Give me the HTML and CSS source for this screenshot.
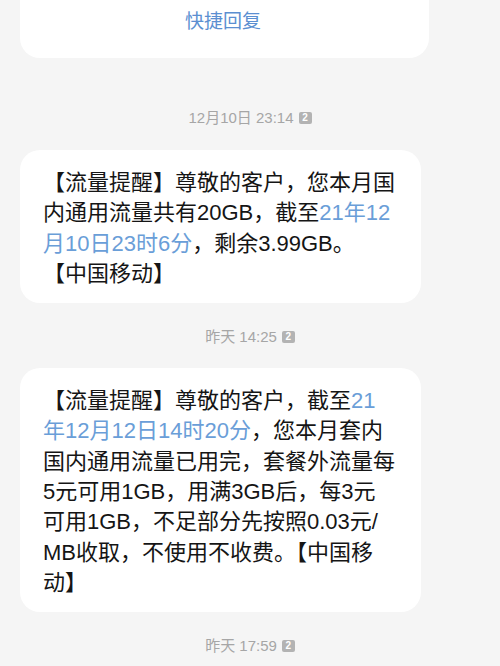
FILE: index.html
```html
<!DOCTYPE html>
<html lang="zh-CN">
<head>
<meta charset="utf-8">
<link rel="stylesheet" href="styles.css">
</head>
<body>
<div class="thread">
  <div class="card card-top">
    <div class="quick">快捷回复</div>
  </div>

  <div class="stamp stamp-first"><span>12月10日 23:14</span><span class="sim">2</span></div>

  <div class="card msg">
    <p>【流量提醒】尊敬的客户，您本月国<br>内通用流量共有20GB，截至<span class="link">21年12<br>月10日23时6分</span>，剩余3.99GB。<br>【中国移动】</p>
  </div>

  <div class="stamp"><span>昨天 14:25</span><span class="sim">2</span></div>

  <div class="card msg">
    <p>【流量提醒】尊敬的客户，截至<span class="link">21<br>年12月12日14时20分</span>，您本月套内<br>国内通用流量已用完，套餐外流量每<br>5元可用1GB，用满3GB后，每3元<br>可用1GB，不足部分先按照0.03元/<br>MB收取，不使用不收费。【中国移<br>动】</p>
  </div>

  <div class="stamp"><span>昨天 17:59</span><span class="sim">2</span></div>
</div>
</body>
</html>
```

FILE: styles.css
```css
html, body {
  margin: 0;
  padding: 0;
  background: #f5f5f5;
}
body {
  width: 500px;
  height: 666px;
  overflow: hidden;
  font-family: "Liberation Sans", "Noto Sans CJK SC", sans-serif;
}
.thread {
  display: flex;
  flex-direction: column;
  padding-left: 20px;
}
.card {
  background: #ffffff;
  border-radius: 20px;
}
.card-top {
  width: 409px;
  height: 58px;
  border-radius: 0 0 20px 20px;
  display: flex;
  justify-content: center;
}
.quick {
  color: #5b8fd1;
  font-size: 19px;
  line-height: 24px;
  padding-top: 10px;
  margin-left: -3px;
}
.stamp {
  width: 460px;
  margin: 24px 0 21px;
  display: flex;
  justify-content: center;
  align-items: center;
  gap: 5px;
  color: #a6a6a6;
  font-size: 15px;
  line-height: 20px;
  height: 20px;
}
.stamp-first {
  margin-top: 50px;
  margin-bottom: 22px;
}
.sim {
  width: 13px;
  height: 12px;
  background: #b3b3b3;
  color: #ffffff;
  border-radius: 2px;
  font-size: 10px;
  line-height: 12px;
  text-align: center;
  font-weight: bold;
}
.msg {
  width: 401px;
  box-sizing: border-box;
  padding: 18px 10px 14px 23px;
}
.msg p {
  margin: 0;
  color: #151515;
  font-size: 22px;
  line-height: 30.3px;
  white-space: nowrap;
}
.link {
  color: #6a9ed8;
}
```
